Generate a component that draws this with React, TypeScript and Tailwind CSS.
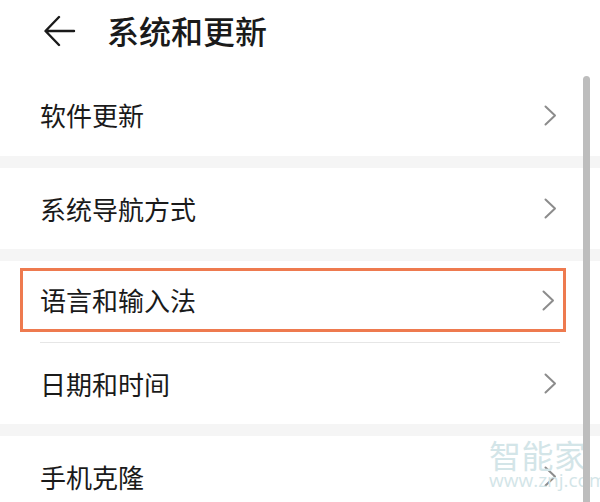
import React from "react";

const font = { fontFamily: '"Noto Sans CJK SC", "Noto Sans", sans-serif' };

function Chevron() {
  return (
    <svg width="13" height="21" viewBox="0 0 13 21" fill="none">
      <path d="M1.5 1.5 L11 10.5 L1.5 19.5" stroke="#8c8c8c" strokeWidth="2" strokeLinecap="round" strokeLinejoin="round" />
    </svg>
  );
}

function Row({ label }: { label: string }) {
  return (
    <div className="flex h-[81px] items-center justify-between pl-[40px] pr-[43px]">
      <span className="text-[26px] leading-none text-[#1a1a1a]">{label}</span>
      <Chevron />
    </div>
  );
}

function Gap() {
  return <div className="h-[12px] bg-[#f5f5f5]" />;
}

export default function App() {
  return (
    <div className="relative h-[502px] w-[600px] overflow-hidden bg-white" style={font}>
      <div className="flex h-[74px] items-start pt-[12px]">
        <svg className="ml-[44px] mt-[3px]" width="32" height="32" viewBox="0 0 32 32" fill="none">
          <path d="M30 16 H2 M15 2 L1.5 16 L15 30" stroke="#1a1a1a" strokeWidth="2.4" strokeLinecap="round" strokeLinejoin="round" />
        </svg>
        <span className="ml-[31px] text-[32px] font-medium leading-[36px] text-[#1a1a1a]">系统和更新</span>
      </div>

      <div className="h-[82px]">
        <div className="flex h-full items-center justify-between pl-[40px] pr-[43px]">
          <span className="text-[26px] leading-none text-[#1a1a1a]">软件更新</span>
          <Chevron />
        </div>
      </div>
      <Gap />
      <Row label="系统导航方式" />
      <Gap />
      <div className="h-[81px] pt-[7px]">
        <div className="ml-[20px] mr-[34px] flex h-[64px] items-center justify-between border-[3px] border-[#ee7a4f] pl-[17px] pr-[8px]">
          <span className="text-[26px] leading-none text-[#1a1a1a]">语言和输入法</span>
          <Chevron />
        </div>
      </div>
      <div className="mx-[40px] h-px bg-[#e6e6e6]" />
      <Row label="日期和时间" />
      <Gap />
      <Row label="手机克隆" />

      <div className="pointer-events-none absolute left-[489px] top-[435px] flex flex-col items-start text-[#d3e5e8]">
        <span className="text-[32px] leading-[38px] tracking-[0.5px]">智能家</span>
        <span className="-mt-[3px] whitespace-nowrap text-[19px] leading-[20px]" style={{ fontFamily: '"Open Sans", sans-serif' }}>www.znj.com</span>
      </div>

      <div className="absolute bottom-0 left-[583px] top-[76px] w-[7px] rounded-t-full bg-[#bdbdbd]" />
    </div>
  );
}
